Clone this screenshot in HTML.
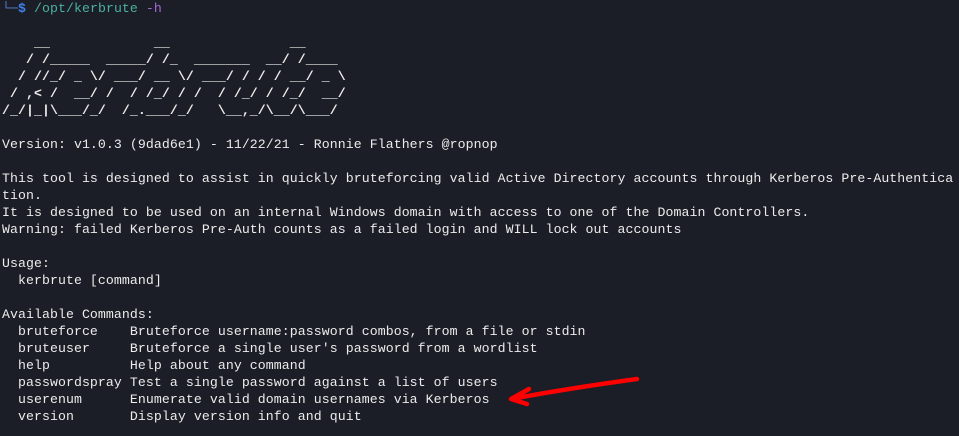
<!DOCTYPE html>
<html><head><meta charset="utf-8"><style>
html,body{margin:0;padding:0;background:#1b1e26;width:959px;height:436px;overflow:hidden}
pre{margin:0;position:absolute;left:2px;top:-0.5px;font-family:"Liberation Mono",monospace;font-size:13.2px;letter-spacing:0.08px;line-height:17px;color:#ececec;white-space:pre}
.g{color:#5a7fd0}.b{color:#3f82f0;font-weight:bold}.t{color:#4ab0a2}.p{color:#a36ad8}
.a{font-weight:bold}
</style></head><body>
<pre><span class="g">└─</span><span class="b">$</span> <span class="t">/opt/kerbrute</span> <span class="p">-h</span>

<span class="a">    __             __               __
   / /_____  _____/ /_  _______  __/ /____
  / //_/ _ \/ ___/ __ \/ ___/ / / / __/ _ \
 / ,&lt; /  __/ /  / /_/ / /  / /_/ / /_/  __/
/_/|_|\___/_/  /_.___/_/   \__,_/\__/\___/</span>

Version: v1.0.3 (9dad6e1) - 11/22/21 - Ronnie Flathers @ropnop

This tool is designed to assist in quickly bruteforcing valid Active Directory accounts through Kerberos Pre-Authentica
tion.
It is designed to be used on an internal Windows domain with access to one of the Domain Controllers.
Warning: failed Kerberos Pre-Auth counts as a failed login and WILL lock out accounts

Usage:
  kerbrute [command]

Available Commands:
  bruteforce    Bruteforce username:password combos, from a file or stdin
  bruteuser     Bruteforce a single user's password from a wordlist
  help          Help about any command
  passwordspray Test a single password against a list of users
  userenum      Enumerate valid domain usernames via Kerberos
  version       Display version info and quit</pre>
<svg width="959" height="436" style="position:absolute;left:0;top:0">
<path d="M637 379 C600 384 560 390 511 399 M511 399 L529 389 M511 399 L527 404" stroke="#f00" stroke-width="4.5" fill="none" stroke-linecap="round" stroke-linejoin="round"/>
</svg>
</body></html>
